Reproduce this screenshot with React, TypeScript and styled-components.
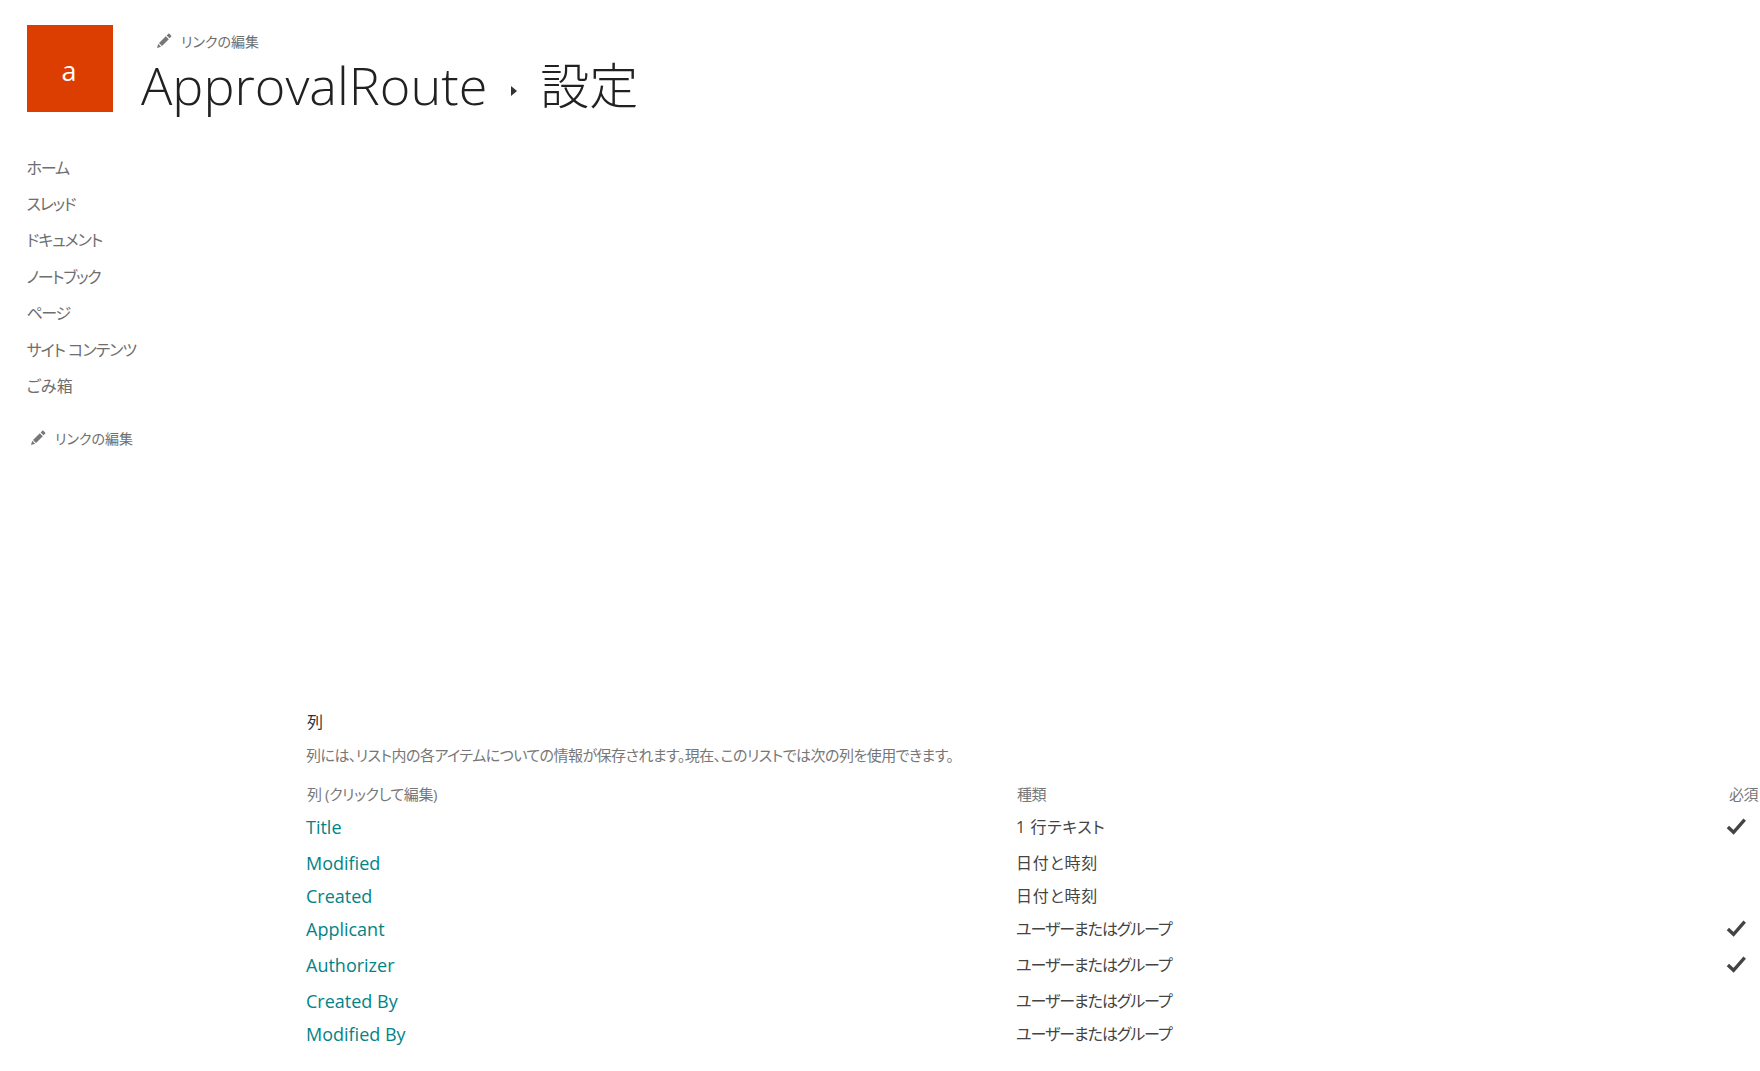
import React from "react";
import styled, { createGlobalStyle } from "styled-components";

const Global = createGlobalStyle`
  html, body { margin: 0; padding: 0; background: #fff; overflow: hidden; }
  body { width: 1760px; height: 1071px; font-family: "Open Sans", "Noto Sans CJK JP", sans-serif; font-feature-settings: "palt"; }
`;

const Page = styled.div`
  width: 1760px;
  height: 1071px;
  overflow: hidden;
  display: flex;
  flex-direction: column;
  padding-top: 25px;
  box-sizing: border-box;
`;

const Header = styled.header`
  display: flex;
  padding-left: 27px;
  gap: 28px;
  height: 121.5px;
`;

const Logo = styled.div`
  width: 86px;
  height: 87px;
  background: #db3e00;
  color: #fff;
  font-size: 27px;
  font-weight: 400;
  padding: 3px 2px 0 0;
  box-sizing: border-box;
  display: flex;
  align-items: center;
  justify-content: center;
`;

const TitleBlock = styled.div`
  display: flex;
  flex-direction: column;
  padding-top: 4px;
`;

const EditLink = styled.a<{ $inset: number }>`
  display: flex;
  align-items: center;
  gap: 9px;
  padding-left: ${(p) => p.$inset}px;
  color: #6e6e6e;
  font-size: 14px;
  letter-spacing: 0;
  height: 24px;
`;

const Title = styled.h1`
  margin: 0;
  display: flex;
  align-items: center;
  color: #212121;
  font-size: 52.2px;
  font-weight: 300;
  line-height: 64px;
`;

const Crumb = styled.span`
  margin: 12px 23px 0 24px;
  width: 0;
  height: 0;
  border-left: 6px solid #333;
  border-top: 5px solid transparent;
  border-bottom: 5px solid transparent;
`;

const TitleKanji = styled.span`
  font-size: 49px;
`;

const Body = styled.div`
  display: flex;
  flex: 1;
`;

const Nav = styled.nav`
  width: 306px;
  flex: none;
  padding: 2px 0 0 26.5px;
  box-sizing: border-box;
`;

const NavItem = styled.a<{ $tracking: number }>`
  display: flex;
  align-items: center;
  height: 36.4px;
  color: #6e6e6e;
  font-size: 16px;
  letter-spacing: ${(p) => p.$tracking}px;
  white-space: pre;
`;

const NavEdit = styled.div`
  margin-top: 23px;
`;

const Main = styled.main`
  flex: 1;
  padding-top: 563px;
  min-width: 0;
`;

const SectionTitle = styled.h2`
  margin: 0;
  padding-left: 1px;
  color: #333;
  font-size: 16px;
  font-weight: 400;
  line-height: 24px;
`;

const Description = styled.p`
  margin: 10px 0 0;
  color: #777;
  font-size: 15px;
  line-height: 22px;
  letter-spacing: -0.53px;
  white-space: nowrap;
`;

const Table = styled.div`
  margin-top: 13px;
  display: grid;
  grid-template-columns: 710px 712px 60px;
`;

const Row = styled.div<{ $h: number }>`
  display: contents;
  & > * { height: ${(p) => p.$h}px; }
`;

const Head = styled.div`
  display: flex;
  align-items: center;
  color: #777;
  font-size: 15px;
  letter-spacing: -0.4px;
  white-space: nowrap;
  padding-left: 1px;
`;

const NameCell = styled.a`
  display: flex;
  align-items: center;
  color: #038387;
  font-size: 18px;
  font-weight: 400;
  white-space: nowrap;
`;

const TypeCell = styled.div<{ $tracking: number }>`
  display: flex;
  align-items: center;
  padding-bottom: 2px;
  box-sizing: border-box;
  color: #444;
  font-size: 16px;
  letter-spacing: ${(p) => p.$tracking}px;
  white-space: pre;
`;

const CheckCell = styled.div`
  display: flex;
  align-items: center;
  margin-left: -2px;
`;

const Pencil = () => (
  <svg width="16" height="16" viewBox="0 0 16 16" aria-hidden="true">
    <path d="M1 15l1.2-4.2 2.9 2.9z M3 10l6.8-6.8 3 3L6 13z M10.6 2.4l1.5-1.5c.5-.5 1-.5 1.5 0l1.5 1.5c.4.5.4 1 0 1.4l-1.5 1.5z" fill="#777" />
  </svg>
);

const Check = () => (
  <svg width="21" height="19" viewBox="0 0 20 18" aria-hidden="true">
    <path d="M1.8 9.5l5.4 5L17.8 2.5" fill="none" stroke="#444" strokeWidth="3.2" />
  </svg>
);

const USER = "ユーザーまたはグループ";
const DATE = "日付と時刻";

const rows = [
  { name: "Title", type: "1 行テキスト", tracking: 0.6, req: true, h: 36 },
  { name: "Modified", type: DATE, tracking: 0.8, req: false, h: 36 },
  { name: "Created", type: DATE, tracking: 0.8, req: false, h: 30 },
  { name: "Applicant", type: USER, tracking: -1.05, req: true, h: 36 },
  { name: "Authorizer", type: USER, tracking: -1.05, req: true, h: 36 },
  { name: "Created By", type: USER, tracking: -1.05, req: false, h: 36 },
  { name: "Modified By", type: USER, tracking: -1.05, req: false, h: 30 },
];

const navItems = [
  { label: "ホーム", tracking: -1.1 },
  { label: "スレッド", tracking: -1.2 },
  { label: "ドキュメント", tracking: -1 },
  { label: "ノートブック", tracking: -1.3 },
  { label: "ページ", tracking: -1.4 },
  { label: "サイト コンテンツ", tracking: -1 },
  { label: "ごみ箱", tracking: 0.3 },
];

export default function App() {
  return (
    <>
      <Global />
      <Page>
        <Header>
          <Logo>a</Logo>
          <TitleBlock>
            <EditLink $inset={15}><Pencil />リンクの編集</EditLink>
            <Title>ApprovalRoute<Crumb /><TitleKanji>設定</TitleKanji></Title>
          </TitleBlock>
        </Header>
        <Body>
          <Nav>
            {navItems.map((n) => <NavItem key={n.label} $tracking={n.tracking}>{n.label}</NavItem>)}
            <NavEdit><EditLink $inset={3.5}><Pencil />リンクの編集</EditLink></NavEdit>
          </Nav>
          <Main>
            <SectionTitle>列</SectionTitle>
            <Description>列には、リスト内の各アイテムについての情報が保存されます。現在、このリストでは次の列を使用できます。</Description>
            <Table>
              <Row $h={30}>
                <Head>列 (クリックして編集)</Head>
                <Head>種類</Head>
                <Head>必須</Head>
              </Row>
              {rows.map((r) => (
                <Row key={r.name} $h={r.h}>
                  <NameCell>{r.name}</NameCell>
                  <TypeCell $tracking={r.tracking}>{r.type}</TypeCell>
                  <CheckCell>{r.req && <Check />}</CheckCell>
                </Row>
              ))}
            </Table>
          </Main>
        </Body>
      </Page>
    </>
  );
}
